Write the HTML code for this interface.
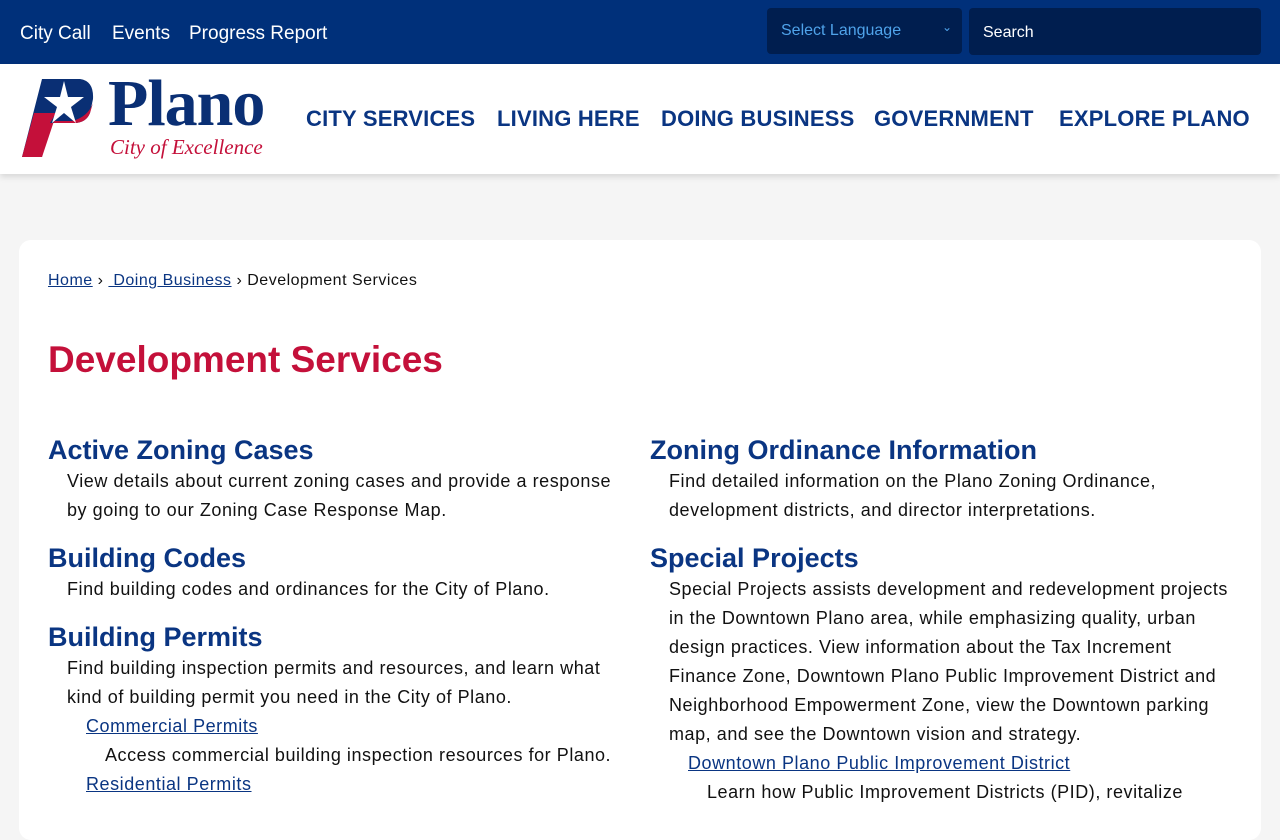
<!DOCTYPE html>
<html><head><style>
*{margin:0;padding:0;box-sizing:border-box}
body{width:1280px;height:800px;overflow:hidden;background:#f5f5f5;font-family:"Liberation Sans",sans-serif;color:#111}
.top{height:64px;background:#00307a;position:relative}
.top a{position:absolute;top:23px;color:#fff;font-size:19px;text-decoration:none}
.sel{position:absolute;left:767px;top:8px;width:195px;height:46px;background:#001e4f;border-radius:4px;color:#4fa3ea;font-size:16px;padding:14px 14px}
.sel span{position:absolute;right:10px;top:12px;font-size:12px}
.srch{position:absolute;left:969px;top:8px;width:292px;height:47px;background:#001e4f;border-radius:4px;color:#fff;font-size:16px;padding:16px 14px}
.hdr{height:110px;background:#fff;position:relative;box-shadow:0 3px 6px rgba(0,0,0,.12)}
.nav a{position:absolute;top:42px;color:#0a3582;font-size:22px;font-weight:bold;text-decoration:none;letter-spacing:0.2px}
.card{position:absolute;left:19px;top:240px;width:1242px;height:600px;background:#fff;border-radius:12px}
.bc{position:absolute;left:48px;top:272px;font-size:16px;letter-spacing:0.5px}
.bc a{color:#0a3582;text-decoration:underline}
h1{position:absolute;left:48px;top:339px;color:#c4103a;font-size:37px;font-weight:bold}
.col{position:absolute;width:580px}
h2{color:#0a3582;font-size:27px;font-weight:bold;line-height:33px}
p{font-size:18px;line-height:29px;padding-left:19px;letter-spacing:0.55px}
.sub{padding-left:38px;font-size:18px;line-height:29px;letter-spacing:0.55px}
.sub a{color:#0a3582;text-decoration:underline}
.subp{padding-left:57px}
</style></head><body>
<div class="top">
<a style="left:20px">City Call</a><a style="left:112px">Events</a><a style="left:189px">Progress Report</a>
<div class="sel">Select Language<span>&#8964;</span></div>
<div class="srch">Search</div>
</div>
<div class="hdr">
<svg style="position:absolute;left:20px;top:13px" width="76" height="82" viewBox="0 0 76 82">
<path d="M22 2H60Q74 4 73 22L70 36Q66 46 54 46H30L22 80H2Z" fill="#0a2f74"/>
<path d="M2 80L14 36H36L30 46H54Q66 46 70 36L73 26Q68 40 52 44H34L22 80Z" fill="#c4103a"/>
<path d="M44 4L48 20H64L51 30L56 46L44 36L32 46L37 30L24 20H40Z" fill="#fff"/>
</svg>
<div style="position:absolute;left:108px;top:2px;font-family:'Liberation Serif',serif;font-weight:bold;font-size:66px;color:#0a2f74;letter-spacing:-1px">Plano</div>
<div style="position:absolute;left:110px;top:71px;font-family:'Liberation Serif',serif;font-style:italic;font-size:21px;color:#c4103a">City of Excellence</div>
<div class="nav"><a style="left:306px">CITY SERVICES</a><a style="left:497px">LIVING HERE</a><a style="left:661px">DOING BUSINESS</a><a style="left:874px">GOVERNMENT</a><a style="left:1059px">EXPLORE PLANO</a></div>
</div>
<div class="card"></div>
<div class="bc"><a>Home</a> › <a>&nbsp;Doing Business</a> › Development Services</div>
<h1>Development Services</h1>
<div class="col" style="left:48px;top:434px">
<h2>Active Zoning Cases</h2>
<p>View details about current zoning cases and provide a response by going to our Zoning Case Response Map.</p>
<h2 style="margin-top:17px">Building Codes</h2>
<p>Find building codes and ordinances for the City of Plano.</p>
<h2 style="margin-top:17px">Building Permits</h2>
<p>Find building inspection permits and resources, and learn what kind of building permit you need in the City of Plano.</p>
<div class="sub"><a>Commercial Permits</a></div>
<div class="sub subp">Access commercial building inspection resources for Plano.</div>
<div class="sub"><a>Residential Permits</a></div>
</div>
<div class="col" style="left:650px;top:434px;width:590px">
<h2>Zoning Ordinance Information</h2>
<p>Find detailed information on the Plano Zoning Ordinance, development districts, and director interpretations.</p>
<h2 style="margin-top:17px">Special Projects</h2>
<p>Special Projects assists development and redevelopment projects in the Downtown Plano area, while emphasizing quality, urban design practices. View information about the Tax Increment Finance Zone, Downtown Plano Public Improvement District and Neighborhood Empowerment Zone, view the Downtown parking map, and see the Downtown vision and strategy.</p>
<div class="sub"><a>Downtown Plano Public Improvement District</a></div>
<div class="sub subp">Learn how Public Improvement Districts (PID), revitalize</div>
</div>
</body></html>
